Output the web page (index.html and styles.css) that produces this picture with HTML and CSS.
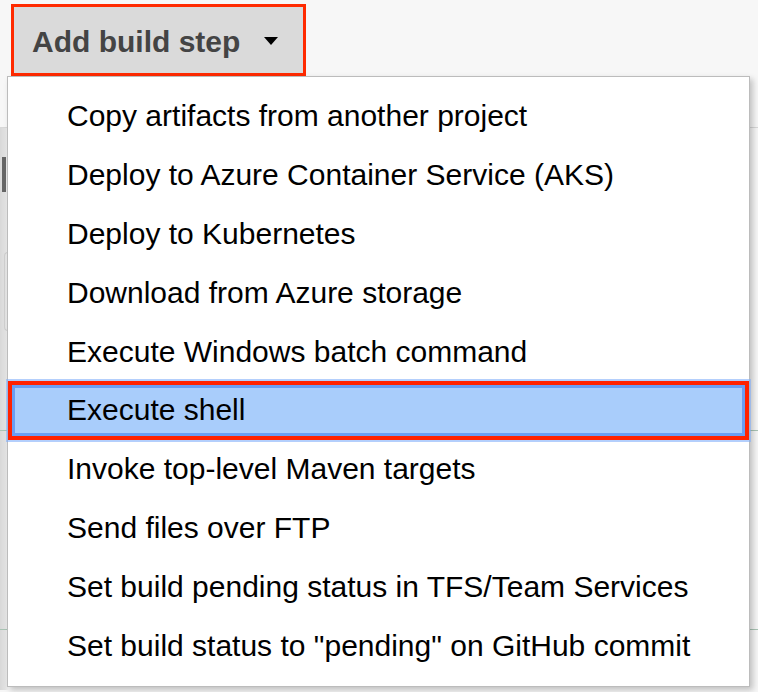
FILE: index.html
```html
<!DOCTYPE html>
<html lang="en">
<head>
<meta charset="utf-8">
<title>Add build step</title>
<link rel="stylesheet" href="styles.css">
</head>
<body>
<div class="page">
  <div class="toolbar">
    <button class="btn" type="button">
      <span class="btn-label">Add build step</span>
      <svg class="caret" width="14" height="8" viewBox="0 0 14 8" aria-hidden="true"><path d="M0 0H14L7 8Z" fill="#000"/></svg>
    </button>
  </div>
  <div class="backdrop">
    <div class="band band-a"><span class="scroll-thumb"></span><span class="field-edge"></span></div>
    <div class="band band-b"></div>
    <div class="band band-c"></div>
  </div>

  <ul class="menu">
    <li class="item">Copy artifacts from another project</li>
    <li class="item">Deploy to Azure Container Service (AKS)</li>
    <li class="item">Deploy to Kubernetes</li>
    <li class="item">Download from Azure storage</li>
    <li class="item">Execute Windows batch command</li>
    <li class="item item-active">Execute shell</li>
    <li class="item">Invoke top-level Maven targets</li>
    <li class="item">Send files over FTP</li>
    <li class="item">Set build pending status in TFS/Team Services</li>
    <li class="item">Set build status to "pending" on GitHub commit</li>
  </ul>
</div>
</body>
</html>
```

FILE: styles.css
```css
html, body {
  margin: 0;
  padding: 0;
}
body {
  background: #f6f6f6;
  font-family: "Liberation Sans", Arial, Helvetica, sans-serif;
}
.page {
  position: relative;
  width: 758px;
  height: 692px;
  overflow: hidden;
  background: #f6f6f6;
}
.toolbar {
  height: 128px;
  padding: 4px 0 0 11px;
  box-sizing: border-box;
  border-bottom: 1px solid #d8d8d8;
  background: #f7f7f7;
}
.btn {
  display: flex;
  align-items: center;
  width: 295px;
  height: 72px;
  box-sizing: border-box;
  border: 3px solid #ff2a00;
  background: #dadada;
  padding: 3px 0 0 18px;
  margin: 0;
  font-family: inherit;
  font-weight: bold;
  font-size: 30px;
  color: #444;
  cursor: pointer;
}
.caret {
  margin-left: 24px;
  margin-top: -2px;
}
.backdrop {
  background: linear-gradient(to right, #d8d8d8 0, #e2e2e2 5px, #f6f6f6 9px);
}
.band {
  position: relative;
  box-sizing: border-box;
}
.band-a {
  height: 303px;
  border-bottom: 1px solid #a9c4b4;
}
.band-b {
  height: 199px;
  border-bottom: 1px solid #a9c4b4;
}
.band-c {
  height: 60px;
}
.scroll-thumb {
  position: absolute;
  left: 2px;
  top: 29px;
  width: 4px;
  height: 35px;
  background: #666;
}
.field-edge {
  position: absolute;
  left: 4px;
  top: 124px;
  width: 6px;
  height: 77px;
  border: 1px solid #cfcfcf;
  border-right: none;
  border-radius: 4px 0 0 4px;
}
.menu {
  position: absolute;
  left: 7px;
  top: 76px;
  width: 743px;
  box-sizing: border-box;
  margin: 0;
  padding: 10px 0 11px;
  list-style: none;
  background: #fff;
  border: 1px solid #bcbcbc;
  box-shadow: 3px 3px 6px rgba(0, 0, 0, 0.22);
}
.item {
  display: flex;
  align-items: center;
  height: 58.8px;
  padding-left: 59px;
  font-size: 30px;
  color: #000;
  white-space: nowrap;
}
.item-active {
  position: relative;
  background: #a9cdfb;
  box-shadow: inset 0 0 0 4px #ff2200, inset 0 0 0 7px #6a9ef2, 0 0 0 2px rgba(130, 175, 250, 0.6);
}
```
